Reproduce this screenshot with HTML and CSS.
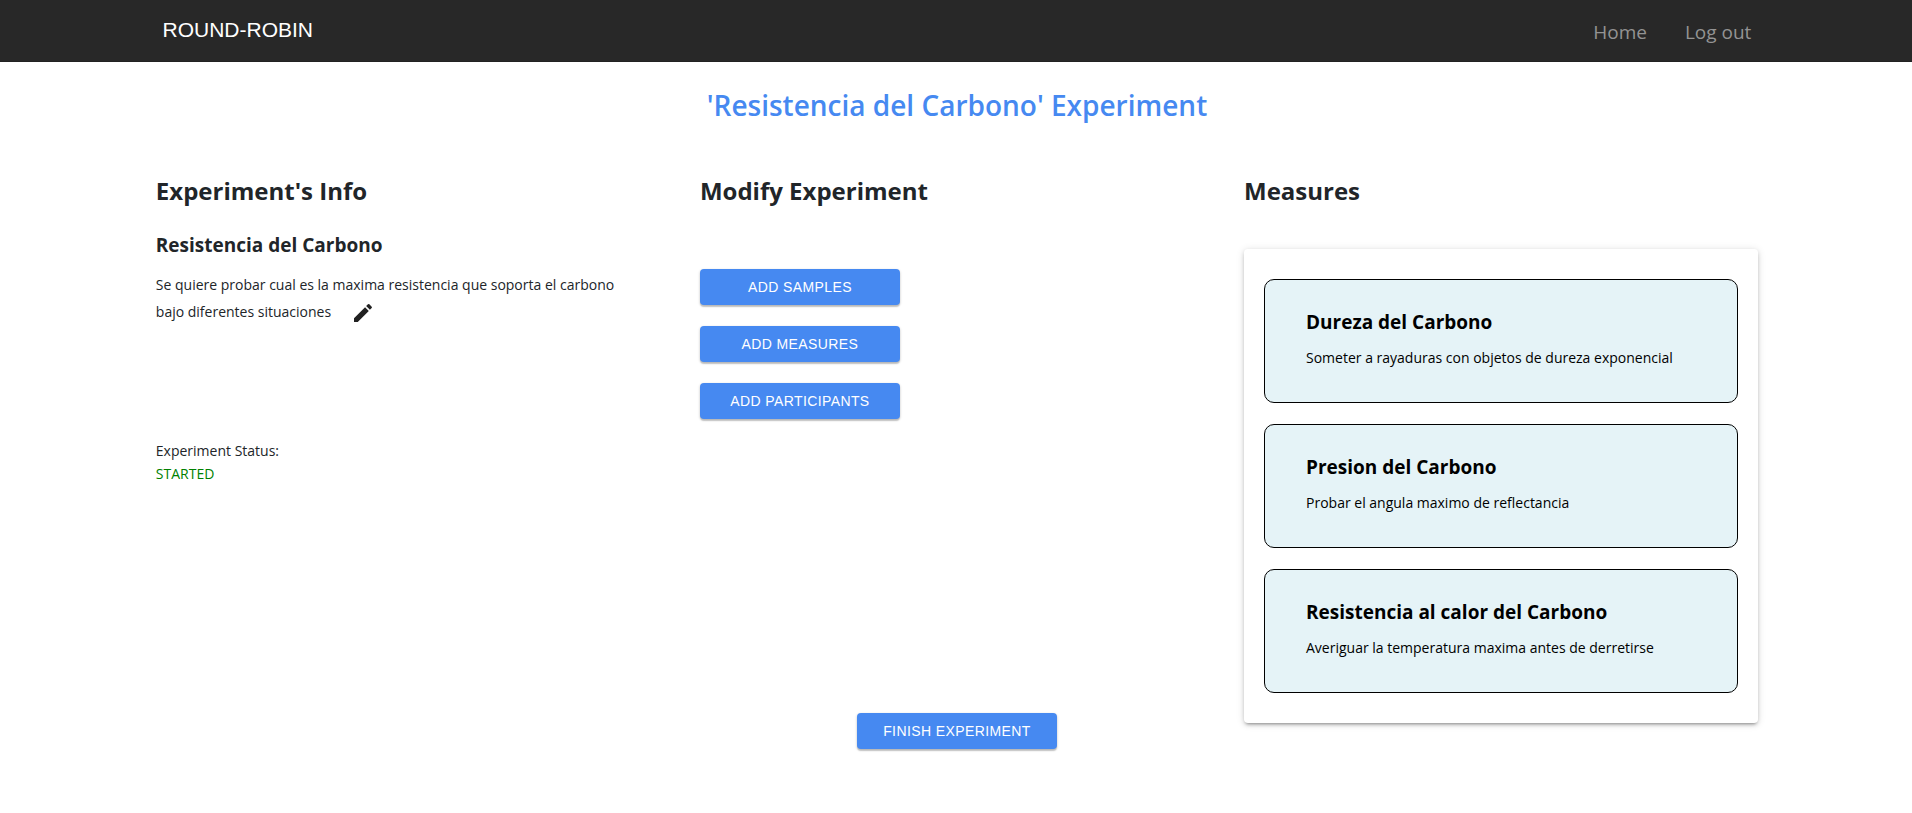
FILE: index.html
```html
<!DOCTYPE html>
<html lang="en">
<head>
<meta charset="utf-8">
<meta name="viewport" content="width=device-width, initial-scale=1">
<title>Round-Robin</title>
<link rel="stylesheet" href="styles.css">
</head>
<body>
<header class="navbar">
  <a class="brand" href="#">ROUND-ROBIN</a>
  <nav class="nav-links">
    <a class="nav-link" href="#">Home</a>
    <a class="nav-link" href="#">Log out</a>
  </nav>
</header>
<main class="page">
  <h1 class="page-title">'Resistencia del Carbono' Experiment</h1>
  <div class="columns">
    <section class="column">
      <h2 class="column-title">Experiment's Info</h2>
      <h3 class="item-title">Resistencia del Carbono</h3>
      <p class="description">Se quiere probar cual es la maxima resistencia que soporta el carbono bajo diferentes situaciones
        <button class="edit-button" type="button" aria-label="Edit description"><svg class="edit-icon" viewBox="0 0 24 24" aria-hidden="true"><path d="M3 17.25V21h3.75L17.81 9.94l-3.75-3.75L3 17.25zM20.71 7.04c.39-.39.39-1.02 0-1.41l-2.34-2.34a.9959.9959 0 0 0-1.41 0l-1.83 1.83 3.75 3.75 1.83-1.83z"/></svg></button></p>
      <div class="status">
        <p class="status-label">Experiment Status:</p>
        <p class="status-value">STARTED</p>
      </div>
    </section>
    <section class="column">
      <h2 class="column-title">Modify Experiment</h2>
      <div class="actions">
        <button class="button" type="button">ADD SAMPLES</button>
        <button class="button" type="button">ADD MEASURES</button>
        <button class="button" type="button">ADD PARTICIPANTS</button>
      </div>
      <button class="button finish" type="button">FINISH EXPERIMENT</button>
    </section>
    <section class="column">
      <h2 class="column-title">Measures</h2>
      <div class="panel">
        <article class="card">
          <h3 class="card-title">Dureza del Carbono</h3>
          <p class="card-text">Someter a rayaduras con objetos de dureza exponencial</p>
        </article>
        <article class="card">
          <h3 class="card-title">Presion del Carbono</h3>
          <p class="card-text">Probar el angula maximo de reflectancia</p>
        </article>
        <article class="card">
          <h3 class="card-title">Resistencia al calor del Carbono</h3>
          <p class="card-text">Averiguar la temperatura maxima antes de derretirse</p>
        </article>
      </div>
    </section>
  </div>
</main>
</body>
</html>
```

FILE: styles.css
```css
*, *::before, *::after { box-sizing: border-box; }

body {
  margin: 0;
  background: #fff;
  color: #212529;
  font-family: "Segoe UI", "Open Sans", "Noto Sans", sans-serif;
  font-size: 14px;
  line-height: 23px;
}

h1, h2, h3, p { margin: 0; }

.navbar {
  display: flex;
  align-items: center;
  justify-content: space-between;
  height: 62px;
  padding: 0 8.4% 0 8.5%;
  background: #282828;
  border-bottom: 1px solid #222;
}

.brand {
  padding-bottom: 2px;
  color: #fff;
  font-family: Arial, "Liberation Sans", sans-serif;
  font-size: 21px;
  text-decoration: none;
}

.nav-links { display: flex; gap: 38px; padding-top: 4px; }

.nav-link {
  color: #939393;
  font-size: 19px;
  text-decoration: none;
}

.page { padding: 23px 8.05% 40px 8.15%; }

.page-title {
  color: #4689f1;
  font-size: 28px;
  font-weight: 600;
  line-height: 40px;
  text-align: center;
}

.columns {
  display: grid;
  grid-template-columns: repeat(3, minmax(0, 1fr));
  gap: 30px;
  margin-top: 48px;
}

.column { display: flex; flex-direction: column; }

.column-title {
  font-size: 24px;
  font-weight: 700;
  line-height: 36px;
}

.item-title {
  margin-top: 22px;
  font-size: 19px;
  font-weight: 700;
  line-height: 28px;
}

.description {
  margin-top: 12px;
  padding-right: 32px;
  line-height: 27px;
}

.edit-button {
  display: inline-flex;
  margin-left: 16px;
  padding: 0;
  border: 0;
  background: none;
  color: #212121;
  vertical-align: middle;
  cursor: pointer;
}

.edit-icon { width: 24px; height: 24px; fill: currentColor; }

.status { margin-top: 114px; }
.status-value { color: #008000; }

.actions {
  display: flex;
  flex-direction: column;
  align-items: flex-start;
  gap: 21px;
  margin-top: 60px;
}

.button {
  width: 200px;
  height: 36px;
  padding: 0 8px;
  border: 0;
  border-radius: 4px;
  background: #4689f1;
  box-shadow: 0 1px 3px rgba(0, 0, 0, .2), 0 2px 1px rgba(0, 0, 0, .16);
  color: #fff;
  font-family: Arial, "Liberation Sans", sans-serif;
  font-size: 14px;
  letter-spacing: 0.02857em;
  cursor: pointer;
}

.finish { align-self: center; margin-top: auto; }

.panel {
  display: grid;
  gap: 21px;
  margin: 40px 0 26px;
  padding: 30px 20px;
  border-radius: 4px;
  box-shadow: 0 3px 3px -2px rgba(0, 0, 0, .3), 0 2px 4px rgba(0, 0, 0, .14), 0 1px 8px rgba(0, 0, 0, .12);
}

.card {
  padding: 28px 41px 33px;
  border: 1px solid #000;
  border-radius: 10px;
  background: #e5f3f7;
  color: #000;
}

.card-title {
  font-size: 19px;
  font-weight: 700;
  line-height: 28px;
}

.card-text { margin-top: 10px; }
```
